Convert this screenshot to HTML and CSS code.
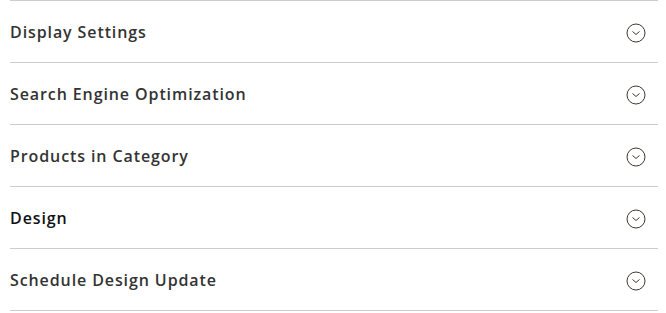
FILE: index.html
```html
<!DOCTYPE html>
<html>
<head>
<meta charset="utf-8">
<link rel="stylesheet" href="styles.css">
</head>
<body>
<div class="sections">
  <div class="section"><span class="title">Display Settings</span><svg class="toggle" viewBox="0 0 20 20" width="20" height="20"><circle cx="10" cy="10" r="9" fill="none" stroke="#41362f" stroke-width="1"/><path d="M6.5 8.5 L10 11.5 L13.5 8.5" fill="none" stroke="#41362f" stroke-width="1"/></svg></div>
  <div class="section"><span class="title">Search Engine Optimization</span><svg class="toggle" viewBox="0 0 20 20" width="20" height="20"><circle cx="10" cy="10" r="9" fill="none" stroke="#41362f" stroke-width="1"/><path d="M6.5 8.5 L10 11.5 L13.5 8.5" fill="none" stroke="#41362f" stroke-width="1"/></svg></div>
  <div class="section"><span class="title">Products in Category</span><svg class="toggle" viewBox="0 0 20 20" width="20" height="20"><circle cx="10" cy="10" r="9" fill="none" stroke="#41362f" stroke-width="1"/><path d="M6.5 8.5 L10 11.5 L13.5 8.5" fill="none" stroke="#41362f" stroke-width="1"/></svg></div>
  <div class="section active"><span class="title">Design</span><svg class="toggle" viewBox="0 0 20 20" width="20" height="20"><circle cx="10" cy="10" r="9" fill="none" stroke="#41362f" stroke-width="1"/><path d="M6.5 8.5 L10 11.5 L13.5 8.5" fill="none" stroke="#41362f" stroke-width="1"/></svg></div>
  <div class="section"><span class="title">Schedule Design Update</span><svg class="toggle" viewBox="0 0 20 20" width="20" height="20"><circle cx="10" cy="10" r="9" fill="none" stroke="#41362f" stroke-width="1"/><path d="M6.5 8.5 L10 11.5 L13.5 8.5" fill="none" stroke="#41362f" stroke-width="1"/></svg></div>
</div>
</body>
</html>
```
FILE: styles.css
```css
html, body {
  margin: 0;
  padding: 0;
  background: #fff;
}
body {
  font-family: "Open Sans", "Liberation Sans", sans-serif;
}
.sections {
  margin-left: 10px;
  width: 648px;
  border-bottom: 1px solid #cccccc;
}
.section {
  display: flex;
  align-items: center;
  justify-content: space-between;
  height: 61px;
  border-top: 1px solid #cccccc;
}
.title {
  font-size: 16px;
  font-weight: 550;
  color: #333333;
  letter-spacing: 0.9px;
}
.active .title {
  color: #111111;
}
.toggle {
  margin-right: 12px;
  margin-top: 3px;
  display: block;
}
```
